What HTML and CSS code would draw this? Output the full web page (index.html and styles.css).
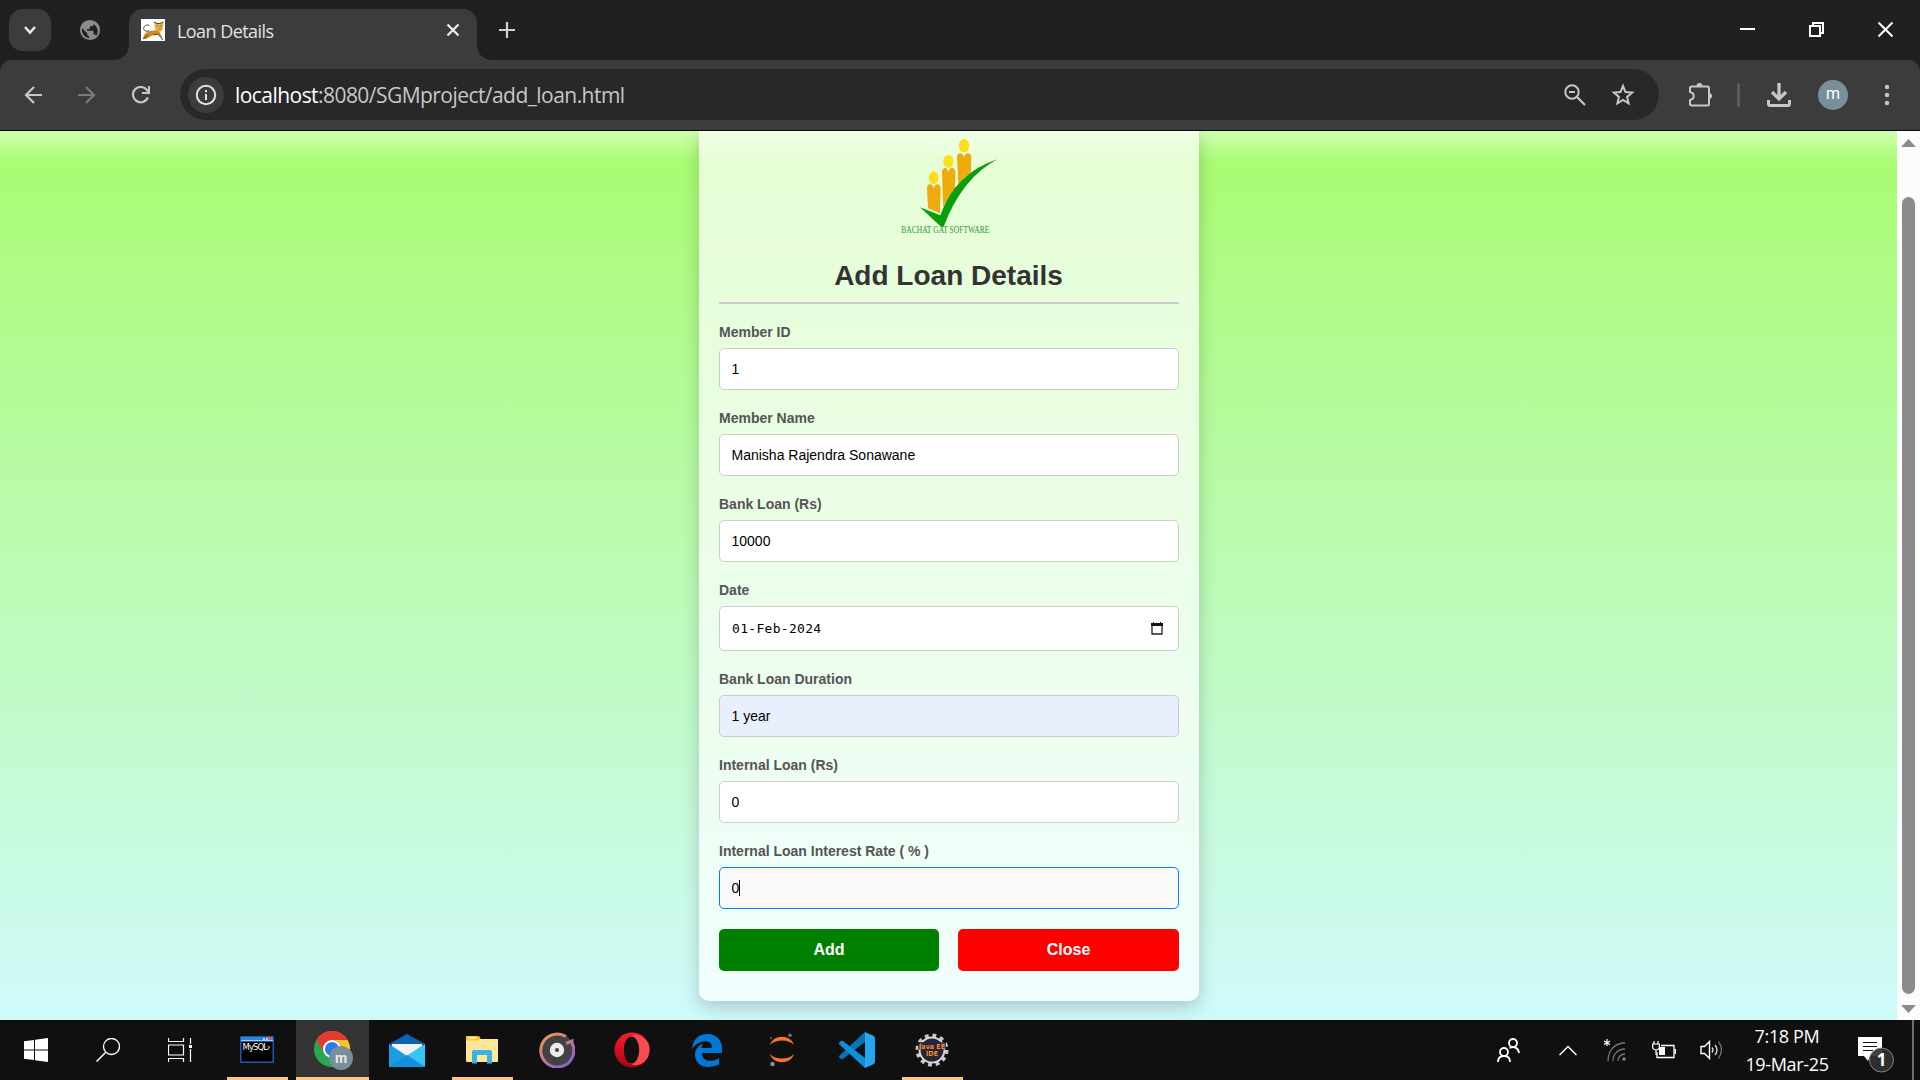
FILE: index.html
```html
<!DOCTYPE html>
<html lang="en">
<head>
<meta charset="utf-8">
<title>Loan Details</title>
<link rel="stylesheet" href="styles.css">
</head>
<body>
<header class="tabstrip">
  <div class="tab-search"><svg width="42" height="42" viewBox="0 0 42 42"><path d="M16 18l5 5.500 5-5.500" fill="none" stroke="#e8e8e8" stroke-width="2.600"/></svg></div>
  <svg class="globe" width="22" height="22" viewBox="0 0 24 24"><path fill="#8b8c8c" d="M12 1a11 11 0 1 0 0 22 11 11 0 0 0 0-22zm-1 19.900A9 9 0 0 1 3.300 10L9 15.600v1.100c0 1.100.9 2 2 2zm7.800-2.600c-.3-.8-1-1.400-1.900-1.400h-1v-3c0-.6-.4-1-1-1h-6v-2h2c.6 0 1-.4 1-1V7.900h2c1.100 0 2-.9 2-2v-.4a9 9 0 0 1 2.900 12.800z"/></svg>
  <div class="tab">
    <svg class="favicon" width="24" height="24" viewBox="0 0 24 24"><path d="M0 1h24v22H0z" fill="#fff"/><path d="M2 21q0-6 7-8l7-1 4 0-1 3 3 6-5-5-5 1-7 4z" fill="#d08a22"/><path d="M13 4l3 1.500h3L22.500 4l-.5 7-3.500 3.500L14 11z" fill="#e5b246"/><path d="M8 13C3 14 2 11 3 9s5-3 5-1M13 4l3 1.500h3L22.500 4M2 21l5-4M12 17l5-1 5 6M16.500 8h1m2 0h1m-2 3h1" fill="none" stroke="#4b4130"/></svg>
    <span class="tab-title">Loan Details</span>
    <svg class="tab-close" width="14" height="14" viewBox="0 0 14 14"><path d="M1.500 1.500l11 11m0-11l-11 11" stroke="#ececec" stroke-width="2.300"/></svg>
  </div>
  <svg class="new-tab" width="16" height="16" viewBox="0 0 16 16"><path d="M8 0v16M0 8h16" stroke="#d0d0d0" stroke-width="2.200"/></svg>
  <div class="window-buttons">
    <svg width="15" height="15" viewBox="0 0 15 15"><path d="M0 7h15" stroke="#fff" stroke-width="2"/></svg>
    <svg width="15" height="15" viewBox="0 0 15 15"><path d="M1 4h10v10H1zM4 4V1h10v10h-3" fill="none" stroke="#fff" stroke-width="2"/></svg>
    <svg width="15" height="15" viewBox="0 0 15 15"><path d="M.5.5l14 14m0-14l-14 14" stroke="#fff" stroke-width="2"/></svg>
  </div>
</header>
<nav class="toolbar">
  <div class="nav-buttons">
    <svg width="18" height="18" viewBox="0 0 18 18"><path d="M18 9H2m8-8L2 9l8 8" fill="none" stroke="#c7c7c7" stroke-width="2.200"/></svg>
    <svg width="18" height="18" viewBox="0 0 18 18"><path d="M0 9h16M8 1l8 8-8 8" fill="none" stroke="#7b7b7b" stroke-width="2.200"/></svg>
    <svg width="18" height="18" viewBox="0 0 18 18"><path d="M15.800 11.500A7.700 7.700 0 1 1 15 4.200l1.500 2" fill="none" stroke="#c7c7c7" stroke-width="2.200"/><path d="M18 0v8h-8V6h6V0z" fill="#c7c7c7"/></svg>
  </div>
  <div class="omnibox">
    <div class="site-info"><svg width="22" height="22" viewBox="0 0 22 22"><circle cx="11" cy="11" r="9.200" fill="none" stroke="#e3e3e3" stroke-width="2"/><path d="M11 10v6" stroke="#e3e3e3" stroke-width="2"/><path d="M11 6v2.200" stroke="#e3e3e3" stroke-width="2"/></svg></div>
    <div class="url"><span class="host">localhost</span>:8080/SGMproject/add_loan.html</div>
    <svg class="lens" width="22" height="22" viewBox="0 0 22 22"><circle cx="8" cy="8" r="6.700" fill="none" stroke="#c7c7c7" stroke-width="2"/><path d="M5 8h6M13 13l8 8" stroke="#c7c7c7" stroke-width="2.200"/></svg>
    <svg class="star" width="24" height="24" viewBox="0 0 24 24"><path d="M12 3l2.500 6.100 6.600.5-5 4.300 1.500 6.500-5.600-3.500-5.600 3.500 1.500-6.500-5-4.300 6.600-.5z" fill="none" stroke="#c7c7c7" stroke-width="2"/></svg>
  </div>
  <svg class="puzzle" width="26" height="26" viewBox="0 0 26 26"><path d="M4.500 4.500h16c1 0 1.500.5 1.500 1.500v16c0 1-.5 1.500-1.500 1.500h-16c-1 0-1.500-.5-1.500-1.500v-4c5-1 5-7 0-8V6c0-1 .5-1.500 1.500-1.500z" fill="none" stroke="#c7c7c7" stroke-width="2"/><path d="M9.500 4a3 3 0 0 1 6 0zM22 11a3 3 0 0 1 0 6z" fill="#c7c7c7"/></svg>
  <span class="divider"></span>
  <svg class="download" width="24" height="24" viewBox="0 0 24 24"><path d="M12 0v15M5 9l7 7 7-7" fill="none" stroke="#c7c7c7" stroke-width="3.300"/><path d="M1.500 17v4c0 1 .5 1.500 1.500 1.500h18c1 0 1.500-.5 1.500-1.500v-4" fill="none" stroke="#c7c7c7" stroke-width="3"/></svg>
  <span class="avatar">m</span>
  <svg class="kebab" width="6" height="24" viewBox="0 0 6 24"><g fill="#c7c7c7"><circle cx="3" cy="4" r="2.200"/><circle cx="3" cy="12" r="2.200"/><circle cx="3" cy="20" r="2.200"/></g></svg>
</nav>
<div class="viewport">
  <main class="page">
    <section class="card">
      <svg class="logo" width="140" height="110" viewBox="0 0 420 330">
        <g fill="#fde01c"><ellipse cx="161" cy="143" rx="15" ry="19"/><ellipse cx="205" cy="94" rx="15" ry="19"/><ellipse cx="252" cy="47" rx="16" ry="20"/></g>
        <g fill="#eeab0c"><path d="M141 173q1-9 9-10 8 0 11 12 3-12 11-12 9 1 10 11l-2 76-36-15z"/><path d="M186 122q2-8 9-9 7 1 10 13 3-12 11-13 8 1 10 10l-1 60q-20 20-36 47z"/><path d="M231 79q2-9 10-9 8 1 11 12 4-12 12-12 9 1 10 10l-1 46q-20 15-38 38z"/></g>
        <path d="M120 232l61 24q45-127 171-168-106 56-161 202h-8z" fill="#0a9e0a"/>
        <text x="64" y="308" textLength="264" lengthAdjust="spacingAndGlyphs" class="logo-text">BACHAT GAT SOFTWARE</text>
      </svg>
      <h1 class="title">Add Loan Details</h1>
      <div class="form">
        <div class="field"><label class="label">Member ID</label><div class="input">1</div></div>
        <div class="field"><label class="label">Member Name</label><div class="input">Manisha Rajendra Sonawane</div></div>
        <div class="field"><label class="label">Bank Loan (Rs)</label><div class="input">10000</div></div>
        <div class="field"><label class="label">Date</label><div class="input date">01-Feb-2024<svg width="12" height="13" viewBox="0 0 12 13"><path d="M1 2h10v10H1z" fill="none" stroke="#222" stroke-width="1.300"/><path d="M0 1h12v3H0zM2 0h1v2H2zM9 0h1v2H9z" fill="#111"/></svg></div></div>
        <div class="field"><label class="label">Bank Loan Duration</label><div class="input autofilled">1 year</div></div>
        <div class="field"><label class="label">Internal Loan (Rs)</label><div class="input">0</div></div>
        <div class="field"><label class="label">Internal Loan Interest Rate ( % )</label><div class="input focused">0<span class="caret"></span></div></div>
      </div>
      <div class="actions"><div class="button add">Add</div><div class="button close">Close</div></div>
    </section>
  </main>
  <aside class="scrollbar">
    <svg width="15" height="8" viewBox="0 0 15 8"><path d="M7.500 0L15 8H0z" fill="#8b8b8b"/></svg>
    <span class="thumb"></span>
    <svg width="15" height="8" viewBox="0 0 15 8"><path d="M7.500 8L15 0H0z" fill="#8b8b8b"/></svg>
  </aside>
</div>
<footer class="taskbar">
  <div class="system">
    <div class="sys-cell"><svg width="24" height="24" viewBox="0 0 24 24"><path d="M0 3.300l10-1.400v9.600H0zM11 1.800L24 0v11.500H11zM0 12.500h10v9.600L0 20.700zM11 12.500h13V24l-13-1.800z" fill="#fff"/></svg></div>
    <div class="sys-cell"><svg width="24" height="24" viewBox="0 0 24 24"><circle cx="15.500" cy="8.500" r="8" fill="none" stroke="#fff" stroke-width="1.300"/><path d="M9.500 14.500L.5 23.500" stroke="#fff" stroke-width="1.500"/></svg></div>
    <div class="sys-cell"><svg width="24" height="24" viewBox="0 0 24 24"><path d="M.5 0v3.500h15V0M.5 24v-3.500h15V24M.5 7h15v10H.5zM22.500 0v6m0 5v13" fill="none" stroke="#fff" stroke-width="1.200"/><path d="M21 7h3v3h-3z" fill="#fff"/></svg></div>
  </div>
  <div class="apps">
    <div class="app running"><svg width="34" height="28" viewBox="0 0 34 28"><path d="M0 1q0-1 1-1h32q1 0 1 1v25q0 1-1 1H1q-1 0-1-1z" fill="#2456a6"/><path d="M1 1h32v4H1z" fill="#2c82e0"/><path d="M1 4h32v1H1z" fill="#8fd0ff"/><path d="M23 2h2v2h-2zm3 0h2v2h-2z" fill="#b4dbff"/><path d="M29 1h3v3h-3z" fill="#e35b4a"/><path d="M1.500 6h31v19.500h-31z" fill="#000"/><text x="2.500" y="14" textLength="28" class="mysql-text">MySQL›</text></svg></div>
    <div class="app running active"><svg width="40" height="40" viewBox="0 0 40 40"><circle cx="19" cy="19" r="18" fill="#2da44e"/><path d="M3.400 10A18 18 0 0 1 34.600 10H19a9 9 0 0 0-7.800 13.500z" fill="#e33b2e"/><path d="M34.600 10A18 18 0 0 1 19 37l7.800-13.500A9 9 0 0 0 19 10z" fill="#fcc12d"/><circle cx="19" cy="19" r="9" fill="#fff"/><circle cx="19" cy="19" r="7" fill="#2d79ed"/><circle cx="28" cy="28" r="12" fill="#78909c"/><text x="28" y="32.500" text-anchor="middle" class="badge-letter">m</text></svg></div>
    <div class="app"><svg width="36" height="33" viewBox="0 0 36 33"><path d="M0 10L16 1q2-2 4 0l16 9v5H0z" fill="#0b62b5"/><path d="M3 10h30v10L18 28 3 20z" fill="#f3f3f3"/><path d="M0 10l18 12L36 10v23H0z" fill="#1c9ce2"/><path d="M18 21.500L36 10v23z" fill="#35c5f4"/><path d="M0 33L18 21l18 12z" fill="#188fdc"/></svg></div>
    <div class="app running"><svg width="32" height="28" viewBox="0 0 32 28"><path d="M0 1h12l3 2h17v22.500q0 .5-1 .5H1q-1 0-1-1z" fill="#ffe694"/><path d="M0 0h12q3 1 2 3l-2 1.500H0z" fill="#fdc42b"/><path d="M3 1.500h7v1.200H3z" fill="#fff"/><path d="M6 27.500V16q0-2 2-2h16q2 0 2 2v11.500h-5V19H11v8.500z" fill="#3ab4e8"/></svg></div>
    <div class="app"><svg width="36" height="36" viewBox="0 0 36 36"><defs><linearGradient id="groove" x1="0" y1="0" x2=".7" y2="1"><stop offset="0" stop-color="#ff9b3f"/><stop offset="1" stop-color="#8c62cd"/></linearGradient></defs><circle cx="18" cy="18" r="17" fill="#424244"/><path d="M27 4.500A16.500 16.500 0 1 0 33 11v-2l-6 2.500" fill="none" stroke="url(#groove)" stroke-width="3"/><circle cx="18" cy="18" r="7.200" fill="#ededed"/><circle cx="18" cy="18" r="2" fill="#444"/></svg></div>
    <div class="app"><svg width="36" height="36" viewBox="0 0 36 36"><defs><linearGradient id="opera" x1="0" y1="0" x2="0" y2="1"><stop offset="0" stop-color="#ff1b2d"/><stop offset="1" stop-color="#a30714"/></linearGradient></defs><ellipse cx="18" cy="18" rx="17.500" ry="17.500" fill="url(#opera)"/><path d="M15 5q8-5 15 1 6 5 5.500 12 0 7-5.500 12-7 6-15 1z" fill="#f94b4f"/><ellipse cx="17.500" cy="18" rx="7.700" ry="13.500" fill="#101010"/></svg></div>
    <div class="app"><svg width="30" height="33" viewBox="0 0 30 33"><path d="M0 15C1 5 7 0 15.500 0 25 0 30 6.500 30 15v4H10c0 10 12 9 17 5v6.500C15 36 2.500 32 3 20c.2-5 4-9 8-10.500-1 1.500-1.500 3-1.500 4.500H20c0-10-14-8-20 1z" fill="#0078d7"/></svg></div>
    <div class="app"><svg width="26" height="34" viewBox="0 0 26 34"><path d="M1 12C4 1 22 1 25 12 20 6 6 6 1 12zM1 21c3 11 21 11 24 0-5 6-19 6-24 0z" fill="#f37726"/><circle cx="21" cy="2.200" r="1.800" fill="#767677"/><circle cx="2" cy="5" r="1" fill="#616262"/><circle cx="3.500" cy="31" r="2.200" fill="#8d8d8e"/></svg></div>
    <div class="app"><svg width="36" height="36" viewBox="0 0 36 36"><path d="M26 0v10L4 27q-1 .7-2 0l-1.500-1.500q-1-1 0-2z" fill="#0872b8"/><path d="M26 36V26L4 9q-1-.7-2 0L.5 10.500q-1 1 0 2z" fill="#0c91d9"/><path d="M26 0l8 3.500q2 1 2 3v23q0 2-2 3L26 36z" fill="#26a5f1"/></svg></div>
    <div class="app running"><svg width="34" height="34" viewBox="0 0 34 34"><circle cx="17" cy="17" r="14.500" fill="none" stroke="#c9c9c9" stroke-width="4" stroke-dasharray="3.800 3.792"/><circle cx="17" cy="17" r="12.500" fill="#29233a" stroke="#d7d7d7" stroke-width="2"/><path d="M3 9h28v7.500H3z" fill="#29233a" fill-opacity=".8"/><text x="4" y="15.500" textLength="26" lengthAdjust="spacingAndGlyphs" class="java-text">Java EE</text><text x="11" y="23" textLength="12" lengthAdjust="spacingAndGlyphs" class="java-text">IDE</text></svg></div>
  </div>
  <div class="tray">
    <svg class="people" width="24" height="24" viewBox="0 0 24 24"><g fill="none" stroke="#fff" stroke-width="1.800"><circle cx="16" cy="5" r="4"/><circle cx="7" cy="14" r="4"/><path d="M1 24c0-4 2-6 6-6s6 2 6 6M12.500 10c5-2 9 0 9.500 5"/></g></svg>
    <svg class="chevron" width="18" height="11" viewBox="0 0 18 11"><path d="M.5 10L9 1.500l8.500 8.500" fill="none" stroke="#fff" stroke-width="1.500"/></svg>
    <svg class="wifi" width="24" height="24" viewBox="0 0 24 24"><path d="M4 1v7M1 3l6 3.500m0-3.500L1 6.500" stroke="#fff" stroke-width="1.200"/><g fill="none" stroke="#777" stroke-width="1.300"><path d="M5 23C5 12 12 5 22 5M10 23c0-7 5-12 12-12M15 23c0-4 3-7 7-7"/></g><circle cx="21" cy="21" r="1.700" fill="#888"/></svg>
    <svg class="battery" width="24" height="18" viewBox="0 0 24 18"><path d="M9 4.500h13v12H5V11M23.500 8v5" fill="none" stroke="#fff" stroke-width="1.300"/><path d="M7 6h6v8H7z" fill="#fff"/><path d="M2 0v3m4-3v3M.7 3h6.600v4Q6 9 4 9T.7 7zM4 9v5" fill="#101010" stroke="#fff" stroke-width="1.200"/></svg>
    <svg class="volume" width="24" height="20" viewBox="0 0 24 20"><path d="M1 6.500h3.500L9.500 1.500v17l-5-5H1z" fill="none" stroke="#fff" stroke-width="1.400"/><path d="M12 7.500q2 2.500 0 5M15 5q4 5 0 10" fill="none" stroke="#ddd" stroke-width="1.300"/><path d="M18.500 1.500q6 8.500 0 17" fill="none" stroke="#777" stroke-width="1.300"/></svg>
    <div class="clock"><span class="time">7:18 PM</span><span class="day">19-Mar-25</span></div>
    <svg class="notice" width="38" height="38" viewBox="0 0 38 38"><path d="M0 1h24v19H12l-2 5-4-5H0z" fill="#fff"/><path d="M5 6.500h14M5 10.500h14M5 14.500h10" stroke="#101010" stroke-width="1.200"/><circle cx="23.500" cy="24" r="12" fill="#303030" fill-opacity=".92" stroke="#858585"/><text x="23.500" y="30" text-anchor="middle" class="count">1</text></svg>
    <span class="peek"></span>
  </div>
</footer>
</body>
</html>
```
FILE: styles.css
```css
* { box-sizing: border-box; }
html, body { margin: 0; width: 1920px; height: 1080px; overflow: hidden; }
body { display: flex; flex-direction: column; background: #1f2120; font-family: "Liberation Sans", Arial, sans-serif; }
svg { display: block; flex: none; }

.tabstrip { height: 60px; flex: none; display: flex; align-items: flex-start; padding-left: 9px; background: #1f2120; }
.tab-search { width: 42px; height: 42px; margin-top: 9px; border-radius: 14px; background: #3c3c3c; }
.globe { margin: 19px 0 0 28px; }
.tab { position: relative; width: 348px; height: 51px; margin: 9px 0 0 28px; padding: 0 17px 9px 12px; border-radius: 14px 14px 0 0; background: #3c3c3c; display: flex; align-items: center; }
.tab::before, .tab::after { content: ""; position: absolute; bottom: 0; width: 14px; height: 14px; }
.tab::before { left: -14px; background: radial-gradient(circle at 0 0, transparent 13.500px, #3c3c3c 14px); }
.tab::after { right: -14px; background: radial-gradient(circle at 100% 0, transparent 13.500px, #3c3c3c 14px); }
.tab-title { margin-left: 12px; padding-top: 2px; font: 18px/24px "Open Sans", sans-serif; letter-spacing: -.55px; color: #e3e3e3; white-space: nowrap; }
.tab-close { margin-left: auto; }
.new-tab { margin: 22px 0 0 22px; }
.window-buttons { display: flex; gap: 54px; margin: 22px 27px 0 auto; }

.toolbar { height: 71px; flex: none; display: flex; align-items: center; padding: 0 30px 1px 24px; background: #3c3c3c; border-bottom: 1px solid #0b080d; border-radius: 12px 12px 0 0; }
.nav-buttons { display: flex; gap: 36px; }
.omnibox { width: 1479px; height: 51px; margin-left: 30px; padding: 0 24px 0 8px; border-radius: 26px; background: #282828; display: flex; align-items: center; }
.site-info { width: 36px; height: 36px; border-radius: 50%; background: #3c3c3c; display: grid; place-items: center; }
.url { margin-left: 11px; font: 21px/28px "Open Sans", sans-serif; letter-spacing: -.55px; color: #c7c7c7; white-space: nowrap; }
.host { color: #fff; }
.lens { margin-left: auto; }
.star { margin-left: 25px; }
.puzzle { margin-left: 28px; }
.divider { width: 3px; height: 24px; margin-left: 24px; border-radius: 2px; background: #5d5d5d; }
.download { margin-left: 27px; }
.avatar { width: 30px; height: 30px; margin-left: 27px; border-radius: 50%; background: #78909c; color: #fff; font: 16px/28px Roboto, sans-serif; text-align: center; }
.kebab { margin-left: auto; }

.viewport { height: 889px; flex: none; display: flex; }
.page { width: 1897px; height: 889px; overflow: hidden; display: flex; justify-content: center; background: linear-gradient(#cfffae 0, #a9fc73 32px, #cffaf9 868px, #cffaf9 100%); }
.card { width: 500px; height: 870px; margin-left: 1px; padding: 0 20px; border-radius: 0 0 10px 10px; background: rgba(255,255,255,.7); box-shadow: 0 6px 18px rgba(0,0,0,.2); }
.logo { margin: -1px 0 0 161px; }
.logo-text { font: 29px "Liberation Serif", serif; fill: #35953a; }
.title { height: 49px; margin: 15px 0 0; padding: 4px 1px 0 0; border-bottom: 2px solid #ccc; font-size: 28px; line-height: 34px; text-align: center; color: #333; }
.form { padding-top: 20px; }
.field { margin-bottom: 20px; }
.label { display: block; height: 24px; font-size: 14px; line-height: 17px; font-weight: 700; color: #555; }
.input { height: 42px; padding: 0 11.500px; display: flex; align-items: center; border: 1px solid #ccc; border-radius: 5px; background: #fff; font-size: 14px; color: #000; }
.date { height: 45px; padding-left: 12px; padding-right: 15px; justify-content: space-between; font-family: "DejaVu Sans Mono", monospace; font-size: 13px; letter-spacing: .3px; }
.autofilled { background: #e8f0fe; }
.focused { border-color: #007bff; background: #f9f9f9; }
.caret { width: 1px; height: 16px; background: #000; }
.actions { display: flex; gap: 19px; }
.button { flex: 1; height: 42px; border-radius: 5px; color: #fff; font-size: 16px; line-height: 41px; font-weight: 700; text-align: center; }
.add { flex: 0 0 220px; background: #008000; }
.close { background: #f00; }
.scrollbar { width: 23px; padding: 8px 0 7px; background: #fcfcfc; display: flex; flex-direction: column; align-items: center; }
.thumb { width: 13px; height: 797px; margin: 50px 0 11px; border-radius: 7px; background: #8b8b8b; }

.taskbar { height: 60px; flex: none; display: flex; background: #101010; }
.system { display: flex; }
.sys-cell { width: 72px; display: grid; place-items: center; }
.apps { display: flex; gap: 2px; margin-left: 5px; }
.app { position: relative; width: 73px; height: 60px; padding-right: 2px; display: grid; place-items: center; }
.active { background: #333; padding-right: 0; }
.running::after { content: ""; position: absolute; left: 6px; right: 6px; bottom: 0; height: 3px; background: #ffc57f; }
.active::after { left: 0; right: 0; }
.mysql-text { font: 8.500px "DejaVu Sans", sans-serif; fill: #fff; }
.badge-letter { font: 700 14px Roboto, sans-serif; fill: #e5eaed; }
.java-text { font: 700 7px "DejaVu Sans", sans-serif; fill: #f28b2c; }
.tray { display: flex; align-items: center; margin-left: auto; padding-right: 6px; }
.chevron { margin-left: 38px; }
.wifi { margin-left: 26px; }
.battery { margin-left: 25px; }
.volume { margin-left: 24px; }
.clock { width: 90px; margin-left: 18px; display: flex; flex-direction: column; align-items: center; font: 18px/28px "Open Sans", sans-serif; letter-spacing: -.35px; color: #fff; white-space: nowrap; }
.notice { margin: 10px 16px 0 26px; }
.count { font: 700 17px "Open Sans", sans-serif; fill: #fff; }
.peek { width: 2px; height: 60px; background: #6d6d6d; }
```
